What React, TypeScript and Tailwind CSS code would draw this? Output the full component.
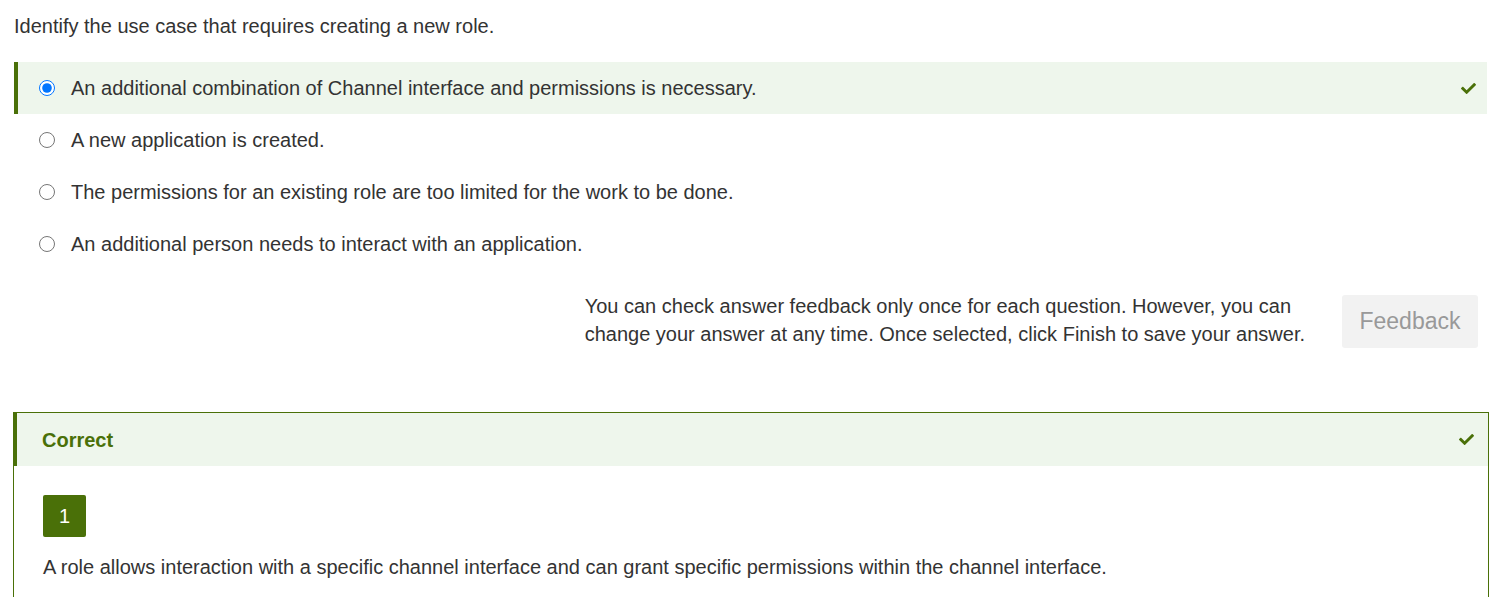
import React from 'react';
import { FaCheck } from 'react-icons/fa';

const options = [
  'An additional combination of Channel interface and permissions is necessary.',
  'A new application is created.',
  'The permissions for an existing role are too limited for the work to be done.',
  'An additional person needs to interact with an application.',
];

export default function App() {
  return (
    <div
      className="min-h-[597px] bg-white text-[#333333] text-[20px]"
      style={{ fontFamily: '"Liberation Sans", Arial, sans-serif' }}
    >
      {/* Question */}
      <div className="pl-[14px] pr-[18px] pt-[12px]">
        <p className="leading-[28px]">Identify the use case that requires creating a new role.</p>

        {/* Options */}
        <div className="mt-[22px] flex flex-col">
          {options.map((opt, i) => {
            const selected = i === 0;
            return (
              <label
                key={opt}
                className={
                  selected
                    ? 'flex h-[52px] items-center border-l-4 border-[#4a7008] bg-[#eef6ec] pl-[21px] pr-[11px]'
                    : 'flex h-[52px] items-center border-l-4 border-transparent pl-[21px] pr-[11px]'
                }
              >
                <input
                  type="radio"
                  name="answer"
                  defaultChecked={selected}
                  className="m-0 h-[16px] w-[16px] shrink-0"
                />
                <span className="ml-[16px] flex-1 leading-[28px]">{opt}</span>
                {selected && <FaCheck className="h-[15px] w-[15px] text-[#4a7008]" />}
              </label>
            );
          })}
        </div>

        {/* Feedback */}
        <div className="mt-[22px] flex items-start justify-end pr-[9px]">
          <p className="leading-[28px]">
            You can check answer feedback only once for each question. However, you can
            <br />
            change your answer at any time. Once selected, click Finish to save your answer.
          </p>
          <button className="ml-[37px] mt-[3px] h-[53px] w-[136px] rounded-[3px] bg-[#f2f2f2] text-[23px] text-[#999999]">
            Feedback
          </button>
        </div>
      </div>

      {/* Result panel */}
      <div className="ml-[13px] mr-[16px] mt-[64px] border border-[#4a7008] border-b-0">
        <div className="flex h-[53px] items-center border-l-4 border-[#4a7008] bg-[#eef6ec] pl-[25px] pr-[14px] -ml-px">
          <span className="flex-1 text-[20px] font-bold text-[#4a7008]">Correct</span>
          <FaCheck className="h-[15px] w-[15px] text-[#4a7008]" />
        </div>
        <div className="pl-[29px] pt-[29px] pb-[20px]">
          <div className="flex h-[42px] w-[43px] items-center justify-center rounded-[2px] bg-[#4a7008] text-[20px] text-white">
            1
          </div>
          <p className="mt-[16px] leading-[28px]">
            A role allows interaction with a specific channel interface and can grant specific permissions within the channel interface.
          </p>
        </div>
      </div>
    </div>
  );
}
